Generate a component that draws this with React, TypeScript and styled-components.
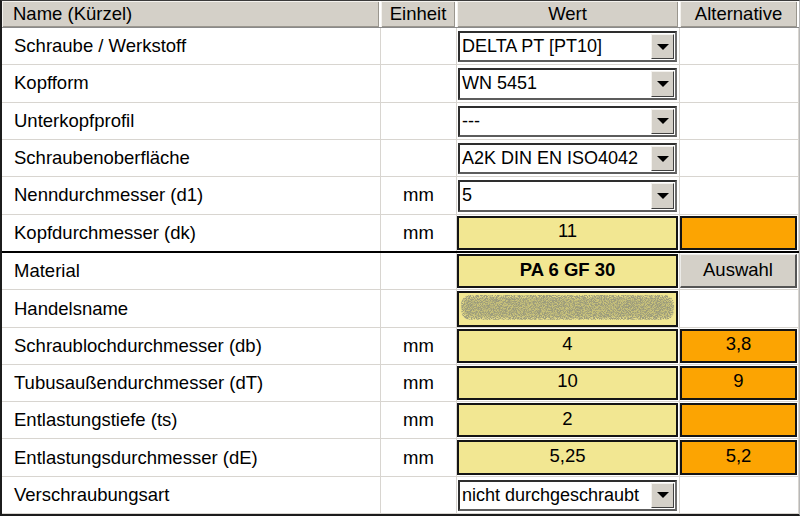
import React from 'react';
import styled, { createGlobalStyle } from 'styled-components';

const GlobalStyle = createGlobalStyle`
  html, body {
    margin: 0;
    padding: 0;
    background: #fff;
  }
  body {
    font-family: "Liberation Sans", Arial, sans-serif;
    color: #000;
  }
`;

type Value =
  | { kind: 'combo'; text: string }
  | { kind: 'field'; text: string; bold?: boolean }
  | { kind: 'smudge' };

type Alt = { kind: 'none' } | { kind: 'orange'; text: string } | { kind: 'button'; text: string };

interface Param {
  name: string;
  unit: string;
  value: Value;
  alt: Alt;
  sep?: boolean;
}

const params: Param[] = [
  { name: 'Schraube / Werkstoff', unit: '', value: { kind: 'combo', text: 'DELTA PT [PT10]' }, alt: { kind: 'none' } },
  { name: 'Kopfform', unit: '', value: { kind: 'combo', text: 'WN 5451' }, alt: { kind: 'none' } },
  { name: 'Unterkopfprofil', unit: '', value: { kind: 'combo', text: '---' }, alt: { kind: 'none' } },
  { name: 'Schraubenoberfläche', unit: '', value: { kind: 'combo', text: 'A2K DIN EN ISO4042' }, alt: { kind: 'none' } },
  { name: 'Nenndurchmesser (d1)', unit: 'mm', value: { kind: 'combo', text: '5' }, alt: { kind: 'none' } },
  { name: 'Kopfdurchmesser (dk)', unit: 'mm', value: { kind: 'field', text: '11' }, alt: { kind: 'orange', text: '' }, sep: true },
  { name: 'Material', unit: '', value: { kind: 'field', text: 'PA 6 GF 30', bold: true }, alt: { kind: 'button', text: 'Auswahl' } },
  { name: 'Handelsname', unit: '', value: { kind: 'smudge' }, alt: { kind: 'none' } },
  { name: 'Schraublochdurchmesser (db)', unit: 'mm', value: { kind: 'field', text: '4' }, alt: { kind: 'orange', text: '3,8' } },
  { name: 'Tubusaußendurchmesser (dT)', unit: 'mm', value: { kind: 'field', text: '10' }, alt: { kind: 'orange', text: '9' } },
  { name: 'Entlastungstiefe (ts)', unit: 'mm', value: { kind: 'field', text: '2' }, alt: { kind: 'orange', text: '' } },
  { name: 'Entlastungsdurchmesser (dE)', unit: 'mm', value: { kind: 'field', text: '5,25' }, alt: { kind: 'orange', text: '5,2' } },
  { name: 'Verschraubungsart', unit: '', value: { kind: 'combo', text: 'nicht durchgeschraubt' }, alt: { kind: 'none' } },
];

const COLUMNS = '379px 76px 223px 1fr';

const Table = styled.div`
  width: 800px;
  height: 516px;
  box-sizing: border-box;
  display: flex;
  flex-direction: column;
  border-left: 2px solid #1c1c1c;
  border-top: 1px solid #3a3a3a;
  border-bottom: 2px solid #1c1c1c;
  border-right: 1px solid #b8b8b8;
  overflow: hidden;
`;

const HeaderRow = styled.div`
  flex: none;
  height: 26px;
  display: grid;
  grid-template-columns: ${COLUMNS};
  background: #fff;
  border-bottom: 1px solid #8a8a8a;
`;

const HeadCell = styled.div<{ $left?: boolean }>`
  display: flex;
  align-items: center;
  justify-content: ${p => (p.$left ? 'flex-start' : 'center')};
  padding: 0 ${p => (p.$left ? '11px' : '0')};
  margin-right: 2px;
  background: #d4d0c8;
  box-shadow: inset 1px 1px #f4f2ee, inset -1px -1px #9a968e;
  font-size: 18.5px;
  white-space: nowrap;
`;

const Row = styled.div<{ $sep?: boolean }>`
  flex: 1;
  min-height: 0;
  display: grid;
  grid-template-columns: ${COLUMNS};
  border-bottom: ${p => (p.$sep ? '2px solid #000' : '1px solid #d8d5d0')};
`;

const Cell = styled.div<{ $align?: 'left' | 'center' }>`
  display: flex;
  align-items: center;
  justify-content: ${p => (p.$align === 'center' ? 'center' : 'flex-start')};
  padding-left: ${p => (p.$align === 'center' ? '0' : '12px')};
  border-right: 1px solid #d8d5d0;
  font-size: 18.5px;
  white-space: nowrap;
  min-width: 0;
`;

const SlotCell = styled.div<{ $tight?: boolean }>`
  display: flex;
  align-items: stretch;
  padding: ${p => (p.$tight ? '1px 1px 1px 0' : '3px 2px 2px 1px')};
  border-right: 1px solid #d8d5d0;
  min-width: 0;
`;

const Combo = styled.div`
  flex: 1;
  display: flex;
  background: #fff;
  border: 2px solid;
  border-color: #2e2e2e #6c6c6c #5c5c5c #2e2e2e;
  min-width: 0;
`;

const ComboText = styled.span`
  flex: 1;
  display: flex;
  align-items: center;
  padding-left: 2px;
  font-size: 18px;
  white-space: nowrap;
  overflow: hidden;
`;

const DropButton = styled.div`
  flex: none;
  width: 21px;
  margin: 1px;
  background: #d4d0c8;
  border: 1px solid;
  border-color: #f4f2ee #404040 #404040 #f4f2ee;
  display: flex;
  align-items: center;
  justify-content: center;
`;

const Arrow = styled.span`
  width: 0;
  height: 0;
  border-left: 6px solid transparent;
  border-right: 6px solid transparent;
  border-top: 6px solid #000;
`;

const Field = styled.div<{ $tone: 'yellow' | 'orange'; $bold?: boolean }>`
  flex: 1;
  display: flex;
  align-items: center;
  justify-content: center;
  background: ${p => (p.$tone === 'yellow' ? '#f2e792' : '#fca402')};
  border: 2px solid #141414;
  font-size: 18.5px;
  font-weight: ${p => (p.$bold ? 700 : 400)};
  padding-bottom: 3px;
  min-width: 0;
  overflow: hidden;
`;

const ChoiceButton = styled.div`
  flex: 1;
  display: flex;
  align-items: center;
  justify-content: center;
  background: #d4d0c8;
  border-top: 1px solid #ecebe8;
  border-left: 1px solid #ecebe8;
  border-right: 2px solid #555;
  border-bottom: 2px solid #555;
  font-size: 18.5px;
  padding-bottom: 2px;
`;

function Smudge(): React.ReactElement {
  return (
    <svg width="100%" height="100%" viewBox="0 0 210 28" preserveAspectRatio="none">
      <defs>
        <filter id="grain" x="0" y="0" width="100%" height="100%">
          <feTurbulence type="fractalNoise" baseFrequency="1.4" numOctaves="2" seed="7" result="noise" />
          <feColorMatrix
            in="noise"
            type="matrix"
            values="0 0 0 0 0.33  0 0 0 0 0.33  0 0 0 0 0.2  4.2 0 0 0 -1.55"
            result="speck"
          />
          <feComposite in="speck" in2="SourceGraphic" operator="in" />
        </filter>
        <filter id="soft">
          <feGaussianBlur stdDeviation="1.5" />
        </filter>
      </defs>
      <rect x="3" y="4" width="204" height="20" rx="8" fill="#a8a468" opacity="0.55" filter="url(#soft)" />
      <rect x="2" y="2" width="206" height="24" rx="9" fill="#000" filter="url(#grain)" />
    </svg>
  );
}

function ValueSlot({ value }: { value: Value }): React.ReactElement {
  if (value.kind === 'combo') {
    return (
      <SlotCell>
        <Combo>
          <ComboText>{value.text}</ComboText>
          <DropButton>
            <Arrow />
          </DropButton>
        </Combo>
      </SlotCell>
    );
  }
  if (value.kind === 'field') {
    return (
      <SlotCell $tight>
        <Field $tone="yellow" $bold={value.bold}>
          {value.text}
        </Field>
      </SlotCell>
    );
  }
  return (
    <SlotCell $tight>
      <Field $tone="yellow">
        <Smudge />
      </Field>
    </SlotCell>
  );
}

function AltSlot({ alt }: { alt: Alt }): React.ReactElement {
  if (alt.kind === 'orange') {
    return (
      <SlotCell $tight>
        <Field $tone="orange">{alt.text}</Field>
      </SlotCell>
    );
  }
  if (alt.kind === 'button') {
    return (
      <SlotCell $tight>
        <ChoiceButton>{alt.text}</ChoiceButton>
      </SlotCell>
    );
  }
  return <Cell />;
}

export default function App(): React.ReactElement {
  return (
    <>
      <GlobalStyle />
      <Table>
        <HeaderRow>
          <HeadCell $left>Name (Kürzel)</HeadCell>
          <HeadCell>Einheit</HeadCell>
          <HeadCell>Wert</HeadCell>
          <HeadCell>Alternative</HeadCell>
        </HeaderRow>
        {params.map(p => (
          <Row key={p.name} $sep={p.sep}>
            <Cell>{p.name}</Cell>
            <Cell $align="center">{p.unit}</Cell>
            <ValueSlot value={p.value} />
            <AltSlot alt={p.alt} />
          </Row>
        ))}
      </Table>
    </>
  );
}
